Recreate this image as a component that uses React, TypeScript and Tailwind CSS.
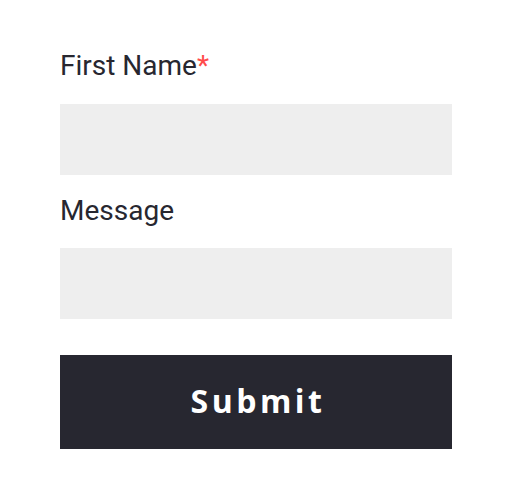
export default function App() {
  return (
    <div className="w-[512px] h-[497px] bg-white pl-[60px] pt-[50px]" style={{ fontFamily: "Roboto, sans-serif" }}>
      <form className="w-[392px] flex flex-col" onSubmit={e => e.preventDefault()}>
        <label className="text-[28px] leading-[32px] h-[32px] text-[#272730] font-['Roboto',sans-serif]">
          First Name<span className="text-[#ff4b4b]">*</span>
        </label>
        <input className="mt-[22px] h-[71px] bg-[#eeeeee] outline-none" />
        <label className="mt-[20px] text-[28px] leading-[32px] h-[32px] text-[#272730] font-['Roboto',sans-serif]">
          Message
        </label>
        <input className="mt-[21px] h-[71px] bg-[#eeeeee] outline-none" />
        <button
          type="submit"
          className="mt-[36px] h-[94px] bg-[#272730] text-white text-[32px] leading-none font-bold tracking-[3.5px] pl-[4px] pb-[2px] font-['Open_Sans',sans-serif]"
        >
          Submit
        </button>
      </form>
    </div>
  );
}
